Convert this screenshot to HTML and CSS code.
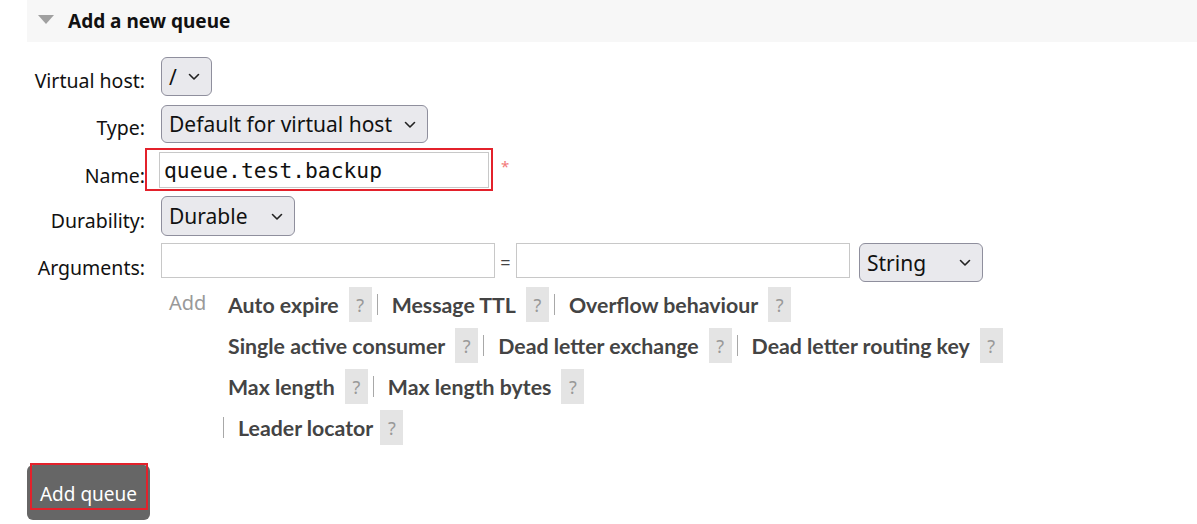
FILE: index.html
```html
<!DOCTYPE html>
<html lang="en">
<head>
<meta charset="utf-8">
<title>Add a new queue</title>
<link rel="stylesheet" href="styles.css">
</head>
<body>
<div class="page">
  <div class="section-head">
    <span class="tri"></span>
    <h2 class="title">Add a new queue</h2>
  </div>
  <form class="form">
    <label class="lbl r-vhost">Virtual host:</label>
    <div class="ctl r-vhost">
      <div class="sel sel-vhost"><span>/</span><svg class="chev" width="12" height="8" viewBox="0 0 12 8"><path d="M1.5 1.5 L6 6 L10.5 1.5" fill="none" stroke="#222" stroke-width="1.6" stroke-linecap="round" stroke-linejoin="round"/></svg></div>
    </div>

    <label class="lbl r-type">Type:</label>
    <div class="ctl r-type">
      <div class="sel sel-type"><span>Default for virtual host</span><svg class="chev" width="12" height="8" viewBox="0 0 12 8"><path d="M1.5 1.5 L6 6 L10.5 1.5" fill="none" stroke="#222" stroke-width="1.6" stroke-linecap="round" stroke-linejoin="round"/></svg></div>
    </div>

    <label class="lbl r-name">Name:</label>
    <div class="ctl r-name">
      <span class="mark-box"><input class="txt name-input" type="text" value="queue.test.backup"></span>
      <span class="req">*</span>
    </div>

    <label class="lbl r-dur">Durability:</label>
    <div class="ctl r-dur">
      <div class="sel sel-dur"><span>Durable</span><svg class="chev" width="12" height="8" viewBox="0 0 12 8"><path d="M1.5 1.5 L6 6 L10.5 1.5" fill="none" stroke="#222" stroke-width="1.6" stroke-linecap="round" stroke-linejoin="round"/></svg></div>
    </div>

    <label class="lbl r-args">Arguments:</label>
    <div class="ctl r-args args-row">
      <input class="txt arg-input" type="text">
      <span class="eq">=</span>
      <input class="txt arg-input" type="text">
      <div class="sel sel-str"><span>String</span><svg class="chev" width="12" height="8" viewBox="0 0 12 8"><path d="M1.5 1.5 L6 6 L10.5 1.5" fill="none" stroke="#222" stroke-width="1.6" stroke-linecap="round" stroke-linejoin="round"/></svg></div>
    </div>

    <div class="ctl r-help help">
      <span class="add">Add</span>
      <div class="links">
        <div class="line">
          <span class="arg">Auto expire</span><span class="q">?</span><span class="sep"></span>
          <span class="arg">Message TTL</span><span class="q">?</span><span class="sep"></span>
          <span class="arg">Overflow behaviour</span><span class="q">?</span>
        </div>
        <div class="line">
          <span class="arg">Single active consumer</span><span class="q">?</span><span class="sep"></span>
          <span class="arg">Dead letter exchange</span><span class="q">?</span><span class="sep"></span>
          <span class="arg">Dead letter routing key</span><span class="q">?</span>
        </div>
        <div class="line">
          <span class="arg">Max length</span><span class="q">?</span><span class="sep"></span>
          <span class="arg">Max length bytes</span><span class="q">?</span>
        </div>
        <div class="line line-last">
          <span class="sep"></span>
          <span class="arg">Leader locator</span><span class="q q-tight">?</span>
        </div>
      </div>
    </div>
  </form>
  <button class="btn" type="button">Add queue</button>
</div>
</body>
</html>
```

FILE: styles.css
```css
html, body {
  margin: 0;
  padding: 0;
  background: #fff;
}

body {
  font-family: "Noto Sans", "Open Sans", sans-serif;
  color: #1a1a1a;
}

.page {
  padding-left: 27px;
}

.section-head {
  height: 42px;
  background: #f7f7f7;
  display: flex;
  align-items: center;
}

.tri {
  width: 0;
  height: 0;
  border-top: 9px solid #a0a0a0;
  border-left: 8px solid transparent;
  border-right: 8px solid transparent;
  margin-left: 11px;
  margin-top: -4px;
}

.title {
  margin: 0 0 0 14px;
  font-size: 19px;
  font-weight: 700;
  color: #111;
  line-height: 24px;
}

.form {
  display: grid;
  grid-template-columns: 118px auto;
  column-gap: 16px;
  margin-top: 15px;
}

.lbl {
  grid-column: 1;
  text-align: right;
  font-size: 19.5px;
  line-height: 24px;
  padding-bottom: 3px;
  align-self: end;
  color: #111;
}

.ctl {
  grid-column: 2;
  display: flex;
  align-items: center;
}

.r-vhost { grid-row: 1; }
.r-type { grid-row: 2; }
.r-name { grid-row: 3; }
.r-dur { grid-row: 4; }
.r-args { grid-row: 5; }
.r-help { grid-row: 6; }

.ctl.r-type { margin-top: 9px; }
.ctl.r-name { margin-top: 5px; }
.ctl.r-dur { margin-top: 5px; }
.ctl.r-args { margin-top: 7px; }

.lbl.r-args {
  align-self: start;
  margin-top: 7px;
  padding-top: 13px;
  padding-bottom: 0;
}

.sel {
  box-sizing: border-box;
  display: inline-flex;
  align-items: center;
  justify-content: space-between;
  font-size: 21px;
  color: #111;
  background-color: #e9e9ed;
  border: 1px solid #8f8f9d;
  border-radius: 6px;
  padding: 0 11px 0 7px;
  white-space: nowrap;
}

.chev {
  flex: none;
  margin-top: 1px;
}

.sel-vhost { height: 39px; width: 51px; }
.sel-type { height: 38px; width: 267px; }
.sel-dur { height: 40px; width: 134px; }
.sel-str { height: 39px; width: 124px; margin-left: 9px; }

.txt {
  font-family: "DejaVu Sans Mono", "Liberation Mono", monospace;
  border: 1px solid #c8c8c8;
  background: #fff;
  margin: 0;
  box-sizing: border-box;
  outline: none;
}

.mark-box {
  display: inline-flex;
  border: 2px solid #e3212b;
  padding: 2px 2px 1px 12px;
  margin-left: -16px;
}

.name-input {
  width: 330px;
  height: 36px;
  font-size: 21.3px;
  padding: 0 4px;
  color: #111;
}

.req {
  color: #f27a7a;
  font-size: 15px;
  align-self: flex-start;
  margin: 8px 0 0 8px;
}

.args-row {
  align-items: flex-start;
}

.arg-input {
  width: 334px;
  height: 35px;
}

.eq {
  font-size: 18px;
  color: #444;
  width: 21px;
  text-align: center;
  line-height: 35px;
  padding-top: 2px;
}

.help {
  align-items: flex-start;
  margin-top: 5px;
}

.add {
  color: #999;
  font-size: 20px;
  margin-left: 8px;
  width: 59px;
  line-height: 24px;
  padding-top: 4px;
}

.links {
  display: flex;
  flex-direction: column;
  gap: 6px;
}

.line {
  display: flex;
  align-items: center;
  height: 35px;
}

.line-last {
  margin-left: -5px;
}

.arg {
  font-family: "Lato", "Noto Sans", sans-serif;
  font-weight: 700;
  font-size: 21.3px;
  color: #444;
}

.q {
  width: 23px;
  height: 35px;
  background: #e4e4e4;
  color: #999;
  font-size: 18px;
  display: flex;
  align-items: center;
  justify-content: center;
  margin-left: 10px;
}

.q-tight { margin-left: 7px; }

.sep {
  width: 0;
  height: 21px;
  border-left: 1px solid #a8a8a8;
  margin: 0 14px 0 5px;
}

.line-last .sep {
  margin-left: 0;
}

.btn {
  position: relative;
  display: block;
  margin-top: 20px;
  width: 123px;
  height: 55px;
  background: #666;
  color: #fff;
  border: none;
  border-radius: 6px;
  font-family: "Noto Sans", "Open Sans", sans-serif;
  font-size: 19px;
  padding: 2px 0 0 0;
}

.btn::after {
  content: "";
  position: absolute;
  left: 3px;
  top: -2px;
  width: 114px;
  height: 43px;
  border: 2px solid #e3212b;
}
```
